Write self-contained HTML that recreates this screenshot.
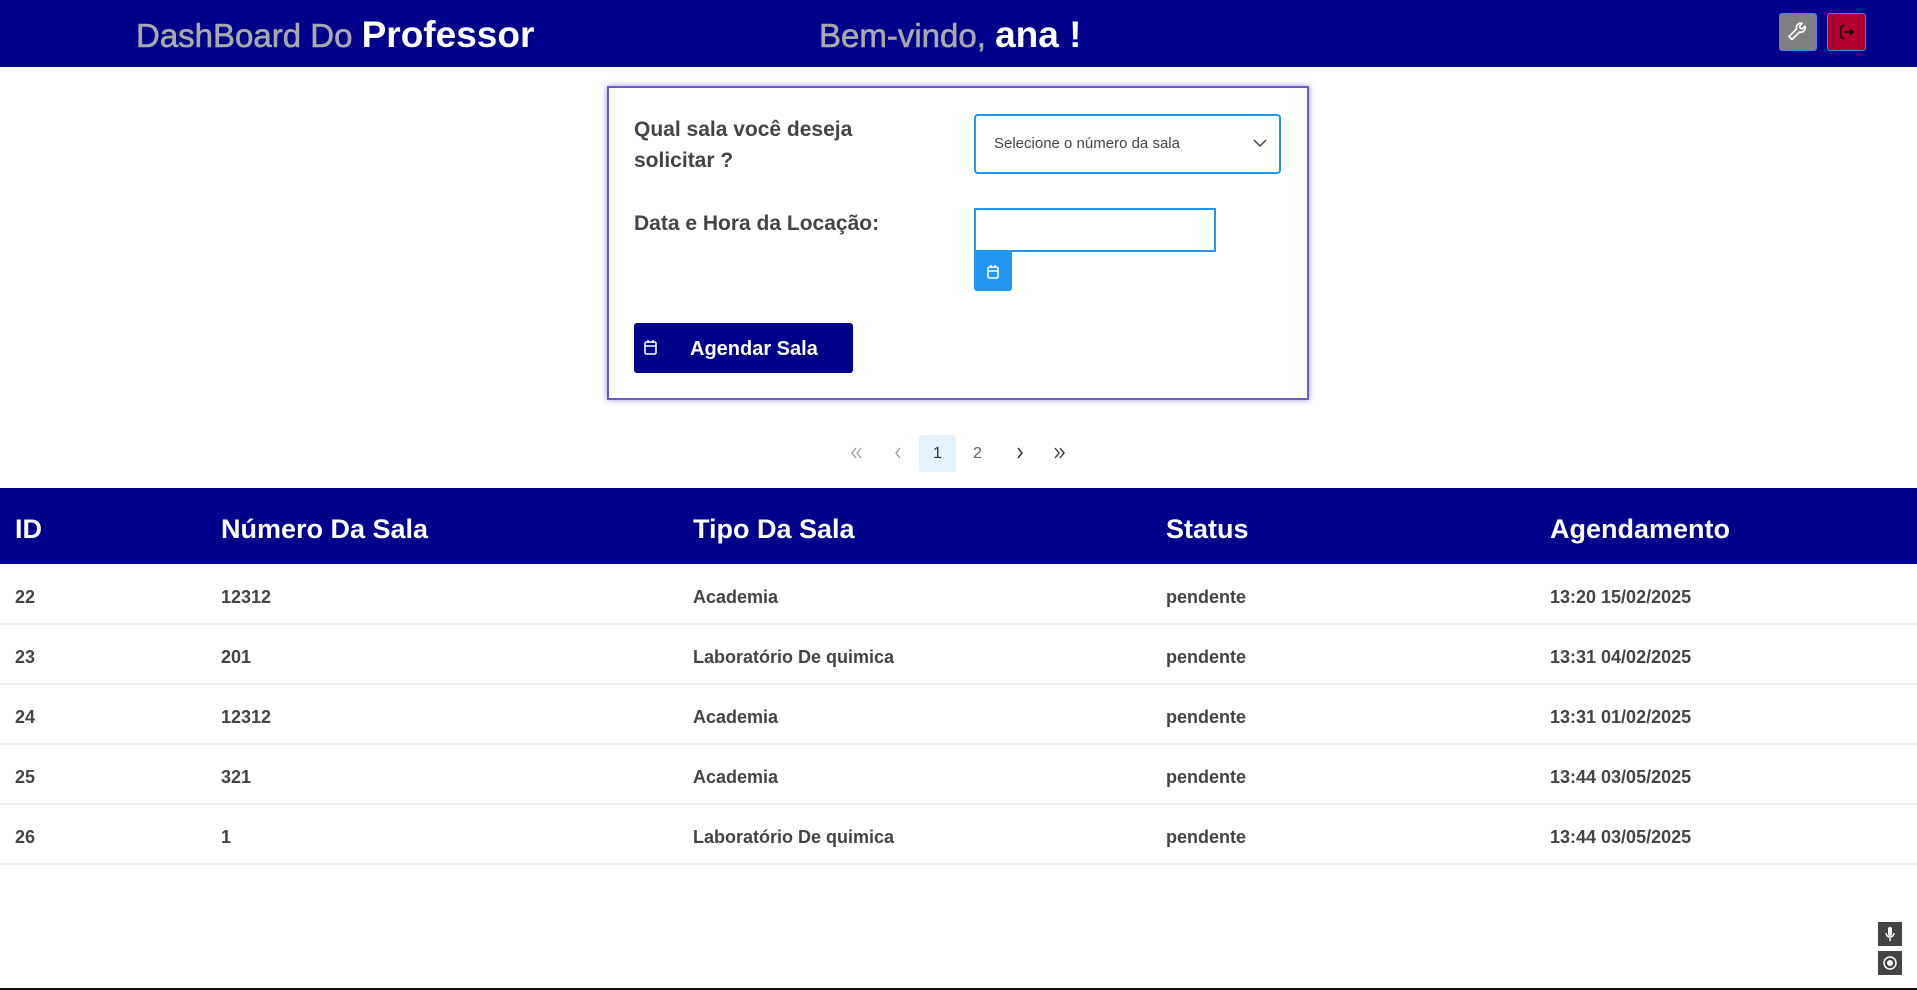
<!DOCTYPE html>
<html><head><meta charset="utf-8"><style>
*{margin:0;padding:0;box-sizing:border-box}
body{width:1917px;height:990px;position:relative;background:#fff;font-family:"Liberation Sans",Arial,sans-serif;overflow:hidden}
.a{position:absolute;white-space:nowrap}
.hdr{position:absolute;left:0;top:0;width:1917px;height:67px;background:#00008b}
.t1{font-size:33px;color:#a9a9a9;top:14px;-webkit-text-stroke:0.6px #a9a9a9}
.t1 b{color:#fff;font-size:37px;-webkit-text-stroke:0}
.card{position:absolute;left:607px;top:86px;width:702px;height:314px;border:2px solid #6a5acd;box-shadow:0 0 6px rgba(80,70,200,.6);background:#fff}
.lbl{font-size:21px;font-weight:bold;color:#444;line-height:31px}
.th{font-size:27px;font-weight:bold;color:#fff;top:514px}
.td{font-size:18px;font-weight:bold;color:#444}
.row{position:absolute;left:0;width:1917px;height:60px;border-bottom:2px solid #eee}
.pg{position:absolute;top:445px}
</style></head><body>
<div class="hdr"></div>
<div class="a t1" style="left:136px">DashBoard Do <b>Professor</b></div>
<div class="a t1" style="left:819px">Bem-vindo, <b>ana !</b></div>
<div class="a" style="left:1779px;top:13px;width:38px;height:38px;background:#808080;border:1px solid #2a8bf2;border-radius:3px"><svg width="36" height="36" viewBox="0 0 36 36"><path d="M12 25.5l7.5-7.5a4.5 4.5 0 0 0 5.5-5.8l-2.6 2.6-2.2-.5-.5-2.2 2.6-2.6a4.5 4.5 0 0 0-5.8 5.5L9 22.5z" fill="none" stroke="#fff" stroke-width="1.6" stroke-linejoin="round"/></svg></div>
<div class="a" style="left:1827px;top:13px;width:39px;height:38px;background:#b00030;border:1px solid #2a8bf2;border-radius:3px"><svg width="37" height="36" viewBox="0 0 37 36"><path d="M16 12h-3v12h3M16 18h9M22 15l3 3-3 3" fill="none" stroke="#111" stroke-width="1.8"/></svg></div>

<div class="card"></div>
<div class="a lbl" style="left:634px;top:114px">Qual sala você deseja<br>solicitar ?</div>
<div class="a" style="left:974px;top:114px;width:307px;height:60px;border:2px solid #2196f3;border-radius:4px"></div>
<div class="a" style="left:994px;top:135px;font-size:15px;color:#444">Selecione o número da sala</div>
<svg class="a" style="left:1252px;top:137px" width="16" height="12" viewBox="0 0 16 12"><path d="M2 3l6 6 6-6" fill="none" stroke="#444" stroke-width="1.5"/></svg>
<div class="a lbl" style="left:634px;top:208px">Data e Hora da Locação:</div>
<div class="a" style="left:974px;top:208px;width:242px;height:44px;border:2px solid #2196f3"></div>
<div class="a" style="left:974px;top:252px;width:38px;height:39px;background:#2196f3;border-radius:0 0 3px 3px"><svg width="38" height="39" viewBox="0 0 38 39"><rect x="14" y="15" width="10" height="11" rx="1.5" fill="none" stroke="#fff" stroke-width="1.6"/><path d="M14 19h10M17 13v3M21 13v3" stroke="#fff" stroke-width="1.6"/></svg></div>
<div class="a" style="left:634px;top:323px;width:219px;height:50px;background:#00008b;border-radius:3px"></div>
<svg class="a" style="left:643px;top:338px" width="16" height="18" viewBox="0 0 16 18"><rect x="2" y="4" width="11" height="12" rx="1.5" fill="none" stroke="#fff" stroke-width="1.6"/><path d="M2 8h11M5 2v3M10 2v3" stroke="#fff" stroke-width="1.6"/></svg>
<div class="a" style="left:690px;top:338px;font-size:20px;font-weight:bold;color:#fff">Agendar Sala</div>

<svg class="pg" style="left:848px" width="16" height="16" viewBox="0 0 16 16"><path d="M8 3l-4 5 4 5M13 3l-4 5 4 5" fill="none" stroke="#999" stroke-width="1.3"/></svg>
<svg class="pg" style="left:890px" width="16" height="16" viewBox="0 0 16 16"><path d="M10 3l-4 5 4 5" fill="none" stroke="#999" stroke-width="1.3"/></svg>
<div class="a" style="left:919px;top:435px;width:37px;height:37px;background:#e3f2fd;border-radius:3px"></div>
<div class="a" style="left:933px;top:445px;font-size:16px;color:#333">1</div>
<div class="a" style="left:973px;top:445px;font-size:16px;color:#666">2</div>
<svg class="pg" style="left:1012px" width="16" height="16" viewBox="0 0 16 16"><path d="M6 3l4 5-4 5" fill="none" stroke="#333" stroke-width="1.5"/></svg>
<svg class="pg" style="left:1052px" width="16" height="16" viewBox="0 0 16 16"><path d="M3 3l4 5-4 5M8 3l4 5-4 5" fill="none" stroke="#333" stroke-width="1.4"/></svg>

<div class="a" style="left:0;top:488px;width:1917px;height:76px;background:#00008b"></div>
<div class="a th" style="left:15px">ID</div>
<div class="a th" style="left:221px">Número Da Sala</div>
<div class="a th" style="left:693px">Tipo Da Sala</div>
<div class="a th" style="left:1166px">Status</div>
<div class="a th" style="left:1550px">Agendamento</div>

<div class="row" style="top:565px"></div>
<div class="row" style="top:625px"></div>
<div class="row" style="top:685px"></div>
<div class="row" style="top:745px"></div>
<div class="row" style="top:805px"></div>

<div class="a td" style="left:15px;top:587px">22</div><div class="a td" style="left:221px;top:587px">12312</div><div class="a td" style="left:693px;top:587px">Academia</div><div class="a td" style="left:1166px;top:587px">pendente</div><div class="a td" style="left:1550px;top:587px">13:20 15/02/2025</div>
<div class="a td" style="left:15px;top:647px">23</div><div class="a td" style="left:221px;top:647px">201</div><div class="a td" style="left:693px;top:647px">Laboratório De quimica</div><div class="a td" style="left:1166px;top:647px">pendente</div><div class="a td" style="left:1550px;top:647px">13:31 04/02/2025</div>
<div class="a td" style="left:15px;top:707px">24</div><div class="a td" style="left:221px;top:707px">12312</div><div class="a td" style="left:693px;top:707px">Academia</div><div class="a td" style="left:1166px;top:707px">pendente</div><div class="a td" style="left:1550px;top:707px">13:31 01/02/2025</div>
<div class="a td" style="left:15px;top:767px">25</div><div class="a td" style="left:221px;top:767px">321</div><div class="a td" style="left:693px;top:767px">Academia</div><div class="a td" style="left:1166px;top:767px">pendente</div><div class="a td" style="left:1550px;top:767px">13:44 03/05/2025</div>
<div class="a td" style="left:15px;top:827px">26</div><div class="a td" style="left:221px;top:827px">1</div><div class="a td" style="left:693px;top:827px">Laboratório De quimica</div><div class="a td" style="left:1166px;top:827px">pendente</div><div class="a td" style="left:1550px;top:827px">13:44 03/05/2025</div>

<div class="a" style="left:1878px;top:922px;width:24px;height:24px;background:#444"><svg width="24" height="24" viewBox="0 0 24 24"><rect x="10" y="5" width="4" height="9" rx="2" fill="#fff"/><path d="M8 11a4 4 0 0 0 8 0M12 15v4" fill="none" stroke="#fff" stroke-width="1.4"/></svg></div>
<div class="a" style="left:1878px;top:951px;width:24px;height:24px;background:#444"><svg width="24" height="24" viewBox="0 0 24 24"><circle cx="12" cy="12" r="6" fill="none" stroke="#fff" stroke-width="1.5"/><circle cx="12" cy="12" r="3" fill="#fff"/></svg></div>
<div class="a" style="left:0;top:988px;width:1917px;height:2px;background:#111"></div>
</body></html>
